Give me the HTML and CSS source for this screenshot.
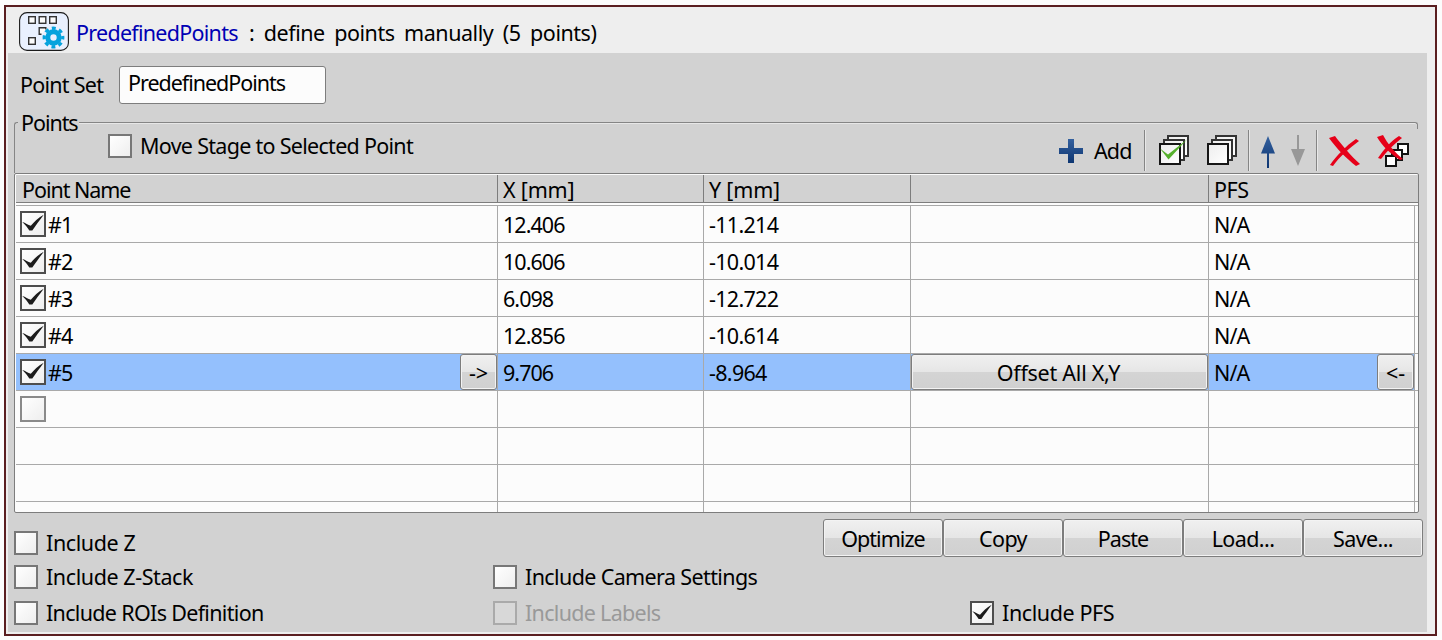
FILE: index.html
```html
<!DOCTYPE html>
<html lang="en">
<head>
<meta charset="utf-8">
<title>PredefinedPoints</title>
<link rel="stylesheet" href="styles.css">
</head>
<body>
<svg class="defs" width="0" height="0">
  <defs>
    <linearGradient id="blue" x1="0" y1="0" x2="0" y2="1"><stop offset="0" stop-color="#34619f"/><stop offset="1" stop-color="#0d3571"/></linearGradient>
    <linearGradient id="sheet" x1="0" y1="0" x2="1" y2="1"><stop offset="0" stop-color="#ededed"/><stop offset="1" stop-color="#fff"/></linearGradient>
    <symbol id="tick" viewBox="0 0 22 22"><path d="M.3 9C3.500 9.800 6 12 8.800 12.800C12 9 16 5 21.700 1.800C17.500 7.500 13.800 12.500 10.300 17.500H7.300C5.500 14.500 3 11.500 .3 9Z" fill="#1c1c1c"/></symbol>
    <symbol id="stack" viewBox="0 0 32 32">
      <g fill="url(#sheet)" stroke="#333" stroke-width="2"><path d="M9 1H29V21H9Z"/><path d="M5 5H25V25H5Z"/><path d="M1 9H21V29H1Z" stroke="#161616"/></g>
    </symbol>
  </defs>
</svg>
<div class="frame">
  <header class="title">
    <svg class="logo" viewBox="0 0 50 39" width="50" height="39">
      <rect x=".6" y=".6" width="48.800" height="37.800" rx="7.500" fill="#e9f0fe" stroke="#1b1b1b" stroke-width="1.100"/>
      <g fill="#fbfbfb" stroke="#333" stroke-width="1.400"><rect x="9.700" y="4.700" width="6.600" height="6.600"/><rect x="20.200" y="4.700" width="6.600" height="6.600"/><rect x="30.700" y="4.700" width="6.600" height="6.600"/><rect x="9.700" y="25.700" width="6.600" height="6.600"/><path d="M22.500 22.300H20.200V15.700H26.800V17.500"/></g>
      <circle cx="34.500" cy="25.500" r="5.700" fill="none" stroke="#05a3dd" stroke-width="5"/>
      <circle cx="34.500" cy="25.500" r="9.300" fill="none" stroke="#05a3dd" stroke-width="3.200" stroke-dasharray="3.900 3.404" stroke-dashoffset="1.950"/>
    </svg>
    <span class="name">PredefinedPoints</span><span class="desc">: define points manually (5 points)</span>
  </header>
  <main class="panel">
    <div class="set"><label class="set-label">Point Set</label><div class="input"><span>PredefinedPoints</span></div></div>
    <div class="legend"><span class="corner"></span><span class="legend-text">Points</span><span class="rule"></span></div>
    <div class="toolbar">
      <label class="check move"><i class="box"></i><span class="t-move">Move Stage to Selected Point</span></label>
      <div class="tools">
        <svg class="plus" width="24" height="24"><path d="M9 0h6v9h9v6h-9v9H9v-9H0V9h9z" fill="url(#blue)"/></svg>
        <span class="add">Add</span><i class="sep s1"></i>
        <svg class="k1" width="32" height="32"><use href="#stack"/><path d="M1 13.500L9 19.500L28 4.500L9.500 24.500Z" fill="#55b02c"/></svg>
        <svg class="k2" width="32" height="32"><use href="#stack"/></svg><i class="sep s2"></i>
        <svg class="up" width="14" height="32"><path d="M7 0L14 17.500H8V32H6V17.500H0Z" fill="url(#blue)"/></svg>
        <svg class="down" width="14" height="32"><path d="M6 0H8V14H14L7 31L0 14H6Z" fill="#989898"/></svg><i class="sep s3"></i>
        <svg class="del" width="32" height="30"><path d="M0 2L6 0C11 7 23 21 31 28L27 30C18 23 7 12 0 2Z M27 3L30 5C21 12 10 21 4 30L1 29C8 19 17 10 27 3Z" fill="#e60019"/></svg>
        <svg class="delall" width="33" height="32"><g fill="#fff" stroke="#111" stroke-width="2"><path d="M21 9H31V19H21Z"/><path d="M15 15H25V25H15Z"/><path d="M9 21H19V31H9Z"/></g><path d="M0 2L6 0C10 8 19 19 26 24L23 25C14 19 5 11 0 2Z M22 1L25 3C17 9 10 16 4 24L1 23C7 14 14 6 22 1Z" fill="#e60019"/></svg>
      </div>
    </div>
    <div class="table">
      <div class="row head"><div>Point Name</div><div class="mm">X [mm]</div><div class="mm">Y [mm]</div><div></div><div class="pfs">PFS</div><div></div></div>
      <div class="row"><div><i class="box on"><svg><use href="#tick"/></svg></i>#1</div><div>12.406</div><div>-11.214</div><div></div><div>N/A</div><div></div></div>
      <div class="row"><div><i class="box on"><svg><use href="#tick"/></svg></i>#2</div><div>10.606</div><div>-10.014</div><div></div><div>N/A</div><div></div></div>
      <div class="row"><div><i class="box on"><svg><use href="#tick"/></svg></i>#3</div><div>6.098</div><div>-12.722</div><div></div><div>N/A</div><div></div></div>
      <div class="row"><div><i class="box on"><svg><use href="#tick"/></svg></i>#4</div><div>12.856</div><div>-10.614</div><div></div><div>N/A</div><div></div></div>
      <div class="row selected"><div><i class="box on"><svg><use href="#tick"/></svg></i>#5<button class="arrow">-&gt;</button></div><div>9.706</div><div>-8.964</div><div class="fill"><button class="offset">Offset All X,Y</button></div><div>N/A<button class="arrow">&lt;-</button></div><div></div></div>
      <div class="row"><div><i class="box dim"></i></div><div></div><div></div><div></div><div></div><div></div></div>
      <div class="row"><div></div><div></div><div></div><div></div><div></div><div></div></div>
      <div class="row"><div></div><div></div><div></div><div></div><div></div><div></div></div>
      <div class="row last"><div></div><div></div><div></div><div></div><div></div><div></div></div>
    </div>
    <div class="bottom">
      <div class="options first">
        <label class="check"><i class="box"></i><span class="t-z">Include Z</span></label>
        <label class="check"><i class="box"></i><span class="t-zs">Include Z-Stack</span></label>
        <label class="check"><i class="box"></i><span class="t-roi">Include ROIs Definition</span></label>
      </div>
      <div class="options second">
        <label class="check"><i class="box"></i><span class="t-cam">Include Camera Settings</span></label>
        <label class="check disabled"><i class="box"></i><span class="t-lab">Include Labels</span></label>
      </div>
      <div class="right">
        <div class="buttons"><button>Optimize</button><button class="wide">Copy</button><button>Paste</button><button class="wide">Load...</button><button class="wide">Save...</button></div>
        <label class="check"><i class="box on"><svg><use href="#tick"/></svg></i><span class="t-pfs">Include PFS</span></label>
      </div>
    </div>
  </main>
</div>
</body>
</html>
```
FILE: styles.css
```css
* { box-sizing: border-box; }
body { margin: 0; padding: 5px 5px 4px 4px; height: 640px; overflow: hidden; background: #fcfcfc; color: #000; font: 21.5px/28px "Noto Sans", sans-serif; letter-spacing: -0.4px; }
.defs { display: block; width: 0; height: 0; }
svg { display: block; flex: none; }
.frame { width: 1433px; height: 631px; border: 2px solid #5a1e20; background: #eee; padding: 0 8px 2px 2px; }
.title { height: 46px; display: flex; align-items: flex-start; padding: 5px 0 0 11px; white-space: nowrap; }
.name { color: #0000b4; margin: 7px 0 0 7px; width: 173px; letter-spacing: -0.73px; }
.desc { margin-top: 7px; word-spacing: 4.3px; letter-spacing: -0.45px; }
.panel { height: 579px; background: #d2d2d2; padding-left: 6px; }
.set { display: flex; height: 64px; padding: 13px 0 0 5px; white-space: nowrap; }
.set-label { width: 100px; padding: 5px 0 0 1px; letter-spacing: -0.75px; }
.input { width: 207px; height: 38px; border: 1px solid #7d7d7d; border-radius: 3px; background: #fcfcfc; padding: 2px 8px; letter-spacing: -1.03px; }
.legend { height: 11px; display: flex; width: 1404px; }
.legend-text { margin: -8px 0 0 2px; padding-left: 1px; width: 59px; white-space: nowrap; letter-spacing: -1.05px; }
.corner { width: 4px; height: 7px; margin-top: 5px; border: solid #858585; border-width: 1px 0 0 1px; border-radius: 3px 0 0; }
.rule { flex: 1; height: 7px; margin-top: 5px; border: solid #858585; border-width: 1px 1px 0 0; border-radius: 0 3px 0 0; box-shadow: inset 0 1px #e7e7e7; }
.toolbar { height: 45px; border-left: 1px solid #858585; display: flex; align-items: flex-start; width: 1404px; }
.check { display: flex; align-items: center; height: 28px; white-space: nowrap; }
.box { display: block; flex: none; width: 24px; height: 24px; border: 2px solid #777; background: linear-gradient(135deg, #fff, #eee); margin-right: 8px; }
.move { margin: 4px 0 0 93px; }
.t-move { letter-spacing: -0.71px; }
.tools { display: flex; align-items: flex-start; margin: 2px 0 0 auto; padding-right: 8px; }
.plus { margin-top: 9px; }
.add { width: 50px; margin-top: 7px; margin-left: 11px; white-space: nowrap; letter-spacing: -0.9px; }
.sep { width: 2px; height: 41px; border-left: 1px solid #858585; border-right: 1px solid #e8e8e8; }
.k1 { margin: 5px 0 0 13px; }
.k2 { margin: 5px 0 0 16px; }
.s2 { margin-left: 9px; }
.up { margin: 6px 0 0 11px; }
.down { margin: 5px 0 0 16px; }
.s3 { margin-left: 11px; }
.del { margin: 6px 0 0 11px; }
.delall { margin: 5px 0 0 16px; }
.table { width: 1405px; height: 340px; border: 1px solid #7d7d7d; border-radius: 2px; background: #fcfcfc; padding: 1px 0 0 1px; overflow: hidden; letter-spacing: -0.95px; }
.row { display: grid; grid-template-columns: 482px 206px 207px 298px 206px 3px; height: 37px; border-bottom: 1px solid #a9a9a9; }
.row > div { display: flex; align-items: center; border-right: 1px solid #a9a9a9; padding: 2px 0 0 5px; min-width: 0; white-space: nowrap; }
.row > div:nth-child(3) { letter-spacing: -0.7px; }
.row > div:first-child { padding-left: 4px; }
.row > div:last-child { border: 0; padding: 0; }
.row .box { width: 26px; height: 26px; margin: -2px 2px 0 0; }
.box.on { border-color: #4e4e4e; }
.row .dim { border-color: #8a8a8a; }
.box svg { width: 100%; height: 100%; }
.row.head { height: 31px; padding-bottom: 2px; grid-template-rows: 28px; line-height: 24px; }
.row.head > div { background: #d2d2d2; border-right-color: #7d7d7d; border-bottom: 1px solid #7d7d7d; padding-top: 3px; }
.row.head > div:nth-child(5) { border-right: 0; letter-spacing: -0.4px; }
.row.head > div:first-child { padding-left: 6px; letter-spacing: -1.05px; }
.row.head > .mm { letter-spacing: -0.2px; }
.row.last { height: 10px; border: 0; }
.selected > div { background: #94c0fd; }
.selected > div:last-child { background: #fcfcfc; }
button { font: inherit; letter-spacing: -0.95px; color: #000; padding: 2px 0 0; border: 1px solid #7d7d7d; border-radius: 3px; background: linear-gradient(#f0f0f0, #e6e6e6 49%, #d4d4d4 51%, #d0d0d0); box-shadow: inset 0 0 0 1px #f3f3f3; }
.arrow { width: 37px; height: 36px; margin: -2px 0 0 auto; letter-spacing: 0; }
.row > .fill { padding: 0; }
.offset { width: 297px; height: 36px; padding-right: 2px; letter-spacing: -0.25px; }
.bottom { display: flex; height: 119px; }
.options { width: 479px; }
.first .check:nth-child(1) { margin-top: 16px; }
.first .check:nth-child(2) { margin-top: 6px; }
.first .check:nth-child(3) { margin-top: 8px; }
.second { padding-top: 50px; width: 330px; }
.second .check + .check { margin-top: 8px; }
.bottom .check span { margin-top: -1px; }
.t-zs { letter-spacing: -0.42px; }
.t-roi { letter-spacing: -0.68px; }
.t-cam { letter-spacing: -0.62px; }
.t-lab { letter-spacing: -0.7px; }
.disabled { color: #999; }
.disabled .box { border-color: #aaa; background: #d8d8d8; }
.right { padding-top: 6px; }
.buttons { display: flex; }
.buttons button { width: 120px; height: 38px; }
.buttons .wide { letter-spacing: -0.6px; }
.right .check { margin: 42px 0 0 147px; }
```
